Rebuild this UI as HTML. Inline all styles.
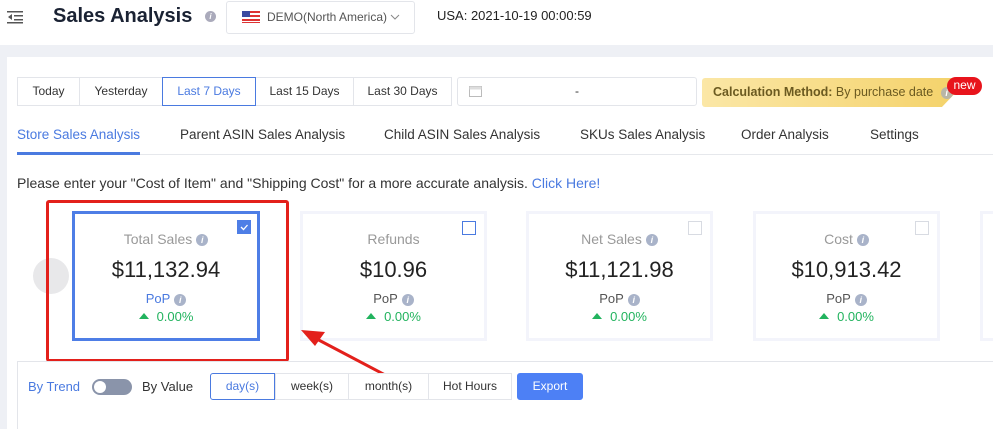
<!DOCTYPE html><html><head><style>
*{box-sizing:border-box;margin:0;padding:0}
body{width:993px;height:429px;overflow:hidden;background:#eef0f5;font-family:"Liberation Sans",sans-serif;position:relative;color:#333}
.a{position:absolute}
.hdr{left:0;top:0;width:993px;height:45px;background:#fff}
.panel{left:7px;top:57px;width:986px;height:372px;background:#fff}
.btn{position:absolute;top:77px;height:29px;border:1px solid #e3e5ea;font-size:12px;line-height:27px;text-align:center;color:#333;background:#fff}
.tab{position:absolute;top:127px;font-size:13.5px;color:#333}
.card{position:absolute;top:211px;width:187px;height:130px;border:3px solid #f3f4fb;background:#fff;text-align:center}
.card .t{margin-top:17px;font-size:14px;color:#999}
.card .v{margin-top:10px;font-size:22px;color:#222}
.card .p{margin-top:8px;font-size:13px;color:#555}
.card .g{margin-top:3px;font-size:13px;color:#22b35e}
.i{display:inline-block;width:12px;height:12px;border-radius:50%;background:#a9b3c9;color:#fff;font-size:9px;line-height:12px;font-style:italic;font-weight:bold;vertical-align:middle;text-align:center;margin-left:4px}
.cb{position:absolute;right:8px;top:7px;width:14px;height:14px;border:1px solid #d8dbe2;background:#fff}
.tri{display:inline-block;width:0;height:0;border-left:5px solid transparent;border-right:5px solid transparent;border-bottom:6px solid #22b35e;margin-right:8px;vertical-align:2px}
.sb{position:absolute;top:373px;height:27px;border:1px solid #e3e5ea;font-size:12px;line-height:25px;text-align:center;color:#333;background:#fff}
</style></head><body>
<div class="a hdr"></div>
<svg class="a" style="left:7px;top:10px" width="18" height="14"><g fill="#555"><rect x="0" y="1" width="16" height="1.5"/><rect x="7" y="5" width="9" height="1.5"/><rect x="7" y="9" width="9" height="1.5"/><rect x="0" y="12" width="16" height="1.5"/><path d="M5 4L1 7l4 3z"/></g></svg>
<div class="a" style="left:53px;top:5px;font-size:20px;font-weight:bold;color:#1a2233">Sales Analysis</div>
<div class="a i" style="left:205px;top:11px;width:11px;height:11px;background:#aab;font-size:8px;line-height:11px;margin:0">i</div>
<div class="a" style="left:226px;top:1px;width:189px;height:33px;border:1px solid #e3e5ea;border-radius:3px;background:#fff"></div>
<svg class="a" style="left:242px;top:11px" width="18" height="12"><rect width="18" height="12" fill="#fff"/><g fill="#d33"><rect y="0" width="18" height="2"/><rect y="4" width="18" height="2"/><rect y="8" width="18" height="2"/><rect y="11" width="18" height="1"/></g><rect width="8" height="6" fill="#3a4aa0"/></svg>
<div class="a" style="left:267px;top:10px;font-size:12px;color:#555">DEMO(North America)</div>
<svg class="a" style="left:390px;top:14px" width="10" height="6"><path d="M1 1l4 4 4-4" stroke="#888" fill="none"/></svg>
<div class="a" style="left:437px;top:8px;font-size:13px;color:#222">USA: 2021-10-19 00:00:59</div>
<div class="a panel"></div>
<div class="btn" style="left:17px;width:63px">Today</div>
<div class="btn" style="left:79px;width:84px">Yesterday</div>
<div class="btn" style="left:255px;width:99px">Last 15 Days</div>
<div class="btn" style="left:353px;width:99px">Last 30 Days</div>
<div class="btn" style="left:162px;width:94px;border-color:#4a7ae0;color:#4a7ae0">Last 7 Days</div>
<div class="btn" style="left:457px;width:240px;border-radius:3px">-</div>
<svg class="a" style="left:469px;top:85px" width="13" height="12"><rect x="0.5" y="1.5" width="12" height="10" fill="none" stroke="#bbb"/><rect x="0.5" y="1.5" width="12" height="3" fill="#ddd"/></svg>
<div class="a" style="left:702px;top:78px;width:258px;height:29px;background:linear-gradient(90deg,#fbe7a6,#f4d26a);clip-path:polygon(0 0,100% 0,100% 35%,93% 100%,0 100%);border-radius:3px;font-size:12.5px;line-height:29px;padding-left:11px;color:#6b5a20"><b>Calculation Method:</b> By purchase date <span class="i" style="background:#b9b6a6">i</span></div>
<div class="a" style="left:947px;top:77px;width:35px;height:18px;border-radius:9px;background:#e8141c;color:#fff;font-size:12px;line-height:17px;text-align:center">new</div>
<div class="tab" style="left:17px;color:#4a7ae0">Store Sales Analysis</div>
<div class="tab" style="left:180px">Parent ASIN Sales Analysis</div>
<div class="tab" style="left:384px">Child ASIN Sales Analysis</div>
<div class="tab" style="left:580px">SKUs Sales Analysis</div>
<div class="tab" style="left:741px">Order Analysis</div>
<div class="tab" style="left:870px">Settings</div>
<div class="a" style="left:17px;top:154px;width:976px;height:1px;background:#e6e8ec"></div>
<div class="a" style="left:17px;top:152px;width:123px;height:3px;background:#4a7ae0"></div>
<div class="a" style="left:17px;top:175px;font-size:14px;color:#333">Please enter your "Cost of Item" and "Shipping Cost" for a more accurate analysis. <span style="color:#4a7ae0">Click Here!</span></div>
<div class="a" style="left:33px;top:258px;width:36px;height:36px;border-radius:50%;background:#e8e8ea"></div>
<div class="card" style="left:72px;width:188px;border-color:#4e7ee6"><div class="cb" style="background:#4e7ee6;border-color:#4e7ee6;top:6px;right:6px"><svg width="12" height="12" style="display:block"><path d="M3 6l2.5 2.5L9.5 4" stroke="#fff" fill="none" stroke-width="1.3"/></svg></div><div class="t">Total Sales<span class="i">i</span></div><div class="v">$11,132.94</div><div class="p" style="color:#4a7ae0">PoP<span class="i">i</span></div><div class="g"><span class="tri"></span>0.00%</div></div>
<div class="card" style="left:300px"><div class="cb" style="border-color:#4a7ae0"></div><div class="t">Refunds</div><div class="v">$10.96</div><div class="p">PoP<span class="i">i</span></div><div class="g"><span class="tri"></span>0.00%</div></div>
<div class="card" style="left:526px"><div class="cb"></div><div class="t">Net Sales<span class="i">i</span></div><div class="v">$11,121.98</div><div class="p">PoP<span class="i">i</span></div><div class="g"><span class="tri"></span>0.00%</div></div>
<div class="card" style="left:753px"><div class="cb"></div><div class="t">Cost<span class="i">i</span></div><div class="v">$10,913.42</div><div class="p">PoP<span class="i">i</span></div><div class="g"><span class="tri"></span>0.00%</div></div>
<div class="card" style="left:980px"></div>
<div class="a" style="left:46px;top:200px;width:243px;height:162px;border:3px solid #e3201b;border-radius:3px"></div>
<div class="a" style="left:17px;top:361px;width:976px;height:1px;background:#e3e5ea"></div>
<div class="a" style="left:17px;top:361px;width:1px;height:68px;background:#e3e5ea"></div>
<svg class="a" style="left:295px;top:325px" width="100" height="55"><path d="M92 51L18 12" stroke="#e3201b" stroke-width="3"/><path d="M6 5l24 2-10 14z" fill="#e3201b"/></svg>
<div class="a" style="left:28px;top:379px;font-size:13px;color:#4a7ae0">By Trend</div>
<div class="a" style="left:92px;top:379px;width:40px;height:16px;border-radius:8px;background:#8a94aa"></div>
<div class="a" style="left:94px;top:381px;width:12px;height:12px;border-radius:50%;background:#fff"></div>
<div class="a" style="left:142px;top:379px;font-size:13px;color:#333">By Value</div>
<div class="sb" style="left:275px;width:74px">week(s)</div>
<div class="sb" style="left:348px;width:81px">month(s)</div>
<div class="sb" style="left:428px;width:84px">Hot Hours</div>
<div class="sb" style="left:210px;width:65px;border-color:#4a7ae0;color:#4a7ae0;border-radius:3px 0 0 3px">day(s)</div>
<div class="sb" style="left:517px;width:66px;background:#4d80f5;border-color:#4d80f5;color:#fff;border-radius:3px">Export</div>
</body></html>
